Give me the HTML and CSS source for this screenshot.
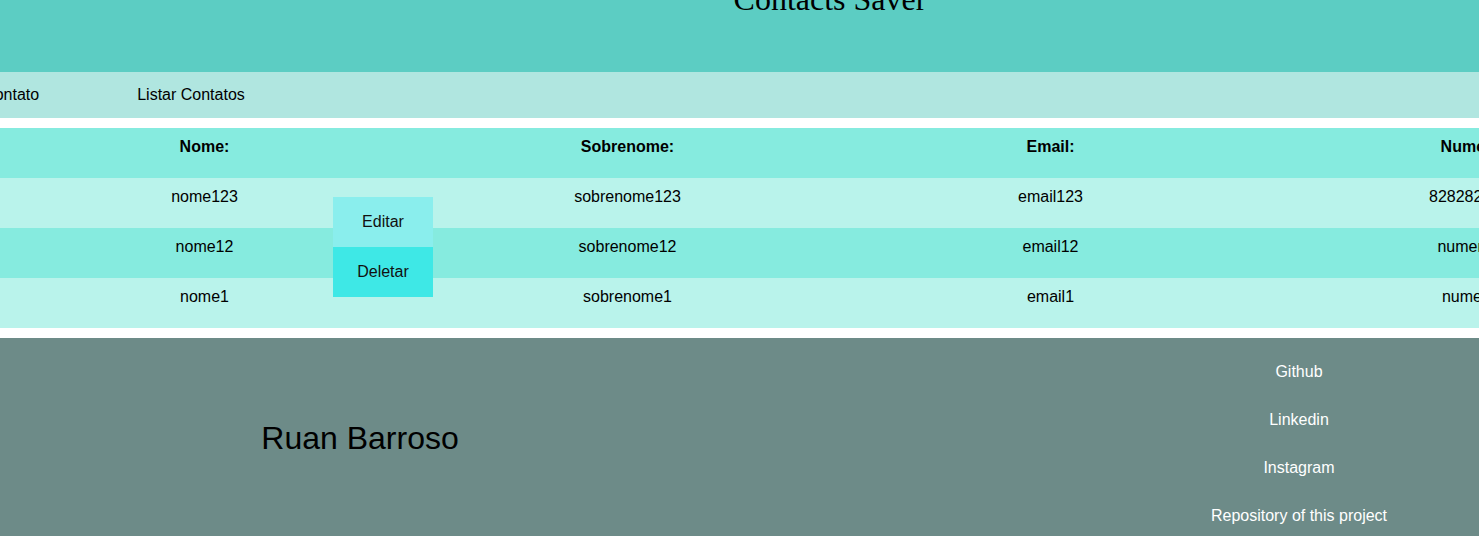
FILE: index.html
```html
<!DOCTYPE html>
<html lang="pt">
<head>
<meta charset="utf-8">
<title>Contacts Saver</title>
<link rel="stylesheet" href="styles.css">
</head>
<body>
<header class="top">
  <h1 class="title">Contacts Saver</h1>
</header>
<nav class="nav">
  <a class="nav-link nav-first" href="#">Adicionar Contato</a>
  <a class="nav-link" href="#">Listar Contatos</a>
</nav>
<section class="list">
  <table class="contacts">
    <thead>
      <tr><th>Nome:</th><th>Sobrenome:</th><th>Email:</th><th>Numero:</th></tr>
    </thead>
    <tbody>
      <tr><td>nome123</td><td>sobrenome123</td><td>email123</td><td>8282828282</td></tr>
      <tr><td>nome12</td><td>sobrenome12</td><td>email12</td><td>numero12</td></tr>
      <tr><td>nome1</td><td>sobrenome1</td><td>email1</td><td>numero1</td></tr>
    </tbody>
  </table>
  <div class="menu">
    <button class="menu-btn edit">Editar</button>
    <button class="menu-btn del">Deletar</button>
  </div>
</section>
<footer class="foot">
  <div class="author">Ruan Barroso</div>
  <div class="spacer"></div>
  <ul class="links">
    <li><a href="#">Github</a></li>
    <li><a href="#">Linkedin</a></li>
    <li><a href="#">Instagram</a></li>
    <li><a href="#">Repository of this project</a></li>
  </ul>
</footer>
</body>
</html>
```
FILE: styles.css
```css
html, body {
  margin: 0;
  padding: 0;
  background: #ffffff;
  overflow: hidden;
  font-family: "Liberation Sans", Arial, sans-serif;
  color: #000;
}

.top {
  height: 72px;
  background: #5ccdc3;
  display: flex;
  justify-content: center;
  padding-left: 181px;
  overflow: hidden;
}

.title {
  margin: -19px 0 0 0;
  font-family: "Liberation Serif", "Times New Roman", serif;
  font-weight: normal;
  font-size: 32px;
  line-height: 36px;
}

.nav {
  height: 46px;
  box-sizing: border-box;
  background: #b0e6e0;
  display: flex;
  gap: 98px;
  padding: 14px 0 14px;
  font-size: 16px;
  line-height: 18px;
}

.nav-link {
  color: #000;
  text-decoration: none;
  white-space: nowrap;
}

.nav-first {
  margin-left: -88px;
}

.list {
  position: relative;
  margin-top: 10px;
  margin-bottom: 10px;
}

.contacts {
  border-collapse: collapse;
  border-spacing: 0;
  table-layout: fixed;
  width: 1692px;
  margin-left: -7px;
}

.contacts th,
.contacts td {
  height: 50px;
  box-sizing: border-box;
  padding: 10px 0 22px;
  line-height: 18px;
  font-size: 16px;
  text-align: center;
  vertical-align: top;
  white-space: nowrap;
}

.contacts th {
  font-weight: bold;
}

.contacts thead tr { background: #86ebdf; }
.contacts tbody tr:nth-child(odd) { background: #b9f3eb; }
.contacts tbody tr:nth-child(even) { background: #86ebdf; }

.menu {
  position: absolute;
  left: 333px;
  top: 69px;
  width: 100px;
  display: flex;
  flex-direction: column;
}

.menu-btn {
  height: 50px;
  border: none;
  margin: 0;
  padding: 0;
  font-family: "Liberation Sans", Arial, sans-serif;
  font-size: 16px;
  color: #111;
  cursor: pointer;
}

.edit { background: #8aeeed; }
.del { background: #3ee8e6; }

.foot {
  background: #6d8b88;
  height: 220px;
  display: grid;
  grid-template-columns: 720px 1fr 360px;
  align-items: start;
}

.author {
  padding-top: 82px;
  font-size: 32px;
  line-height: 36px;
  text-align: center;
}

.links {
  list-style: none;
  margin: 0;
  padding: 10px 0 0;
  text-align: center;
  font-size: 16px;
}

.links li {
  line-height: 48px;
}

.links a {
  color: #ffffff;
  text-decoration: none;
  white-space: nowrap;
}
```
